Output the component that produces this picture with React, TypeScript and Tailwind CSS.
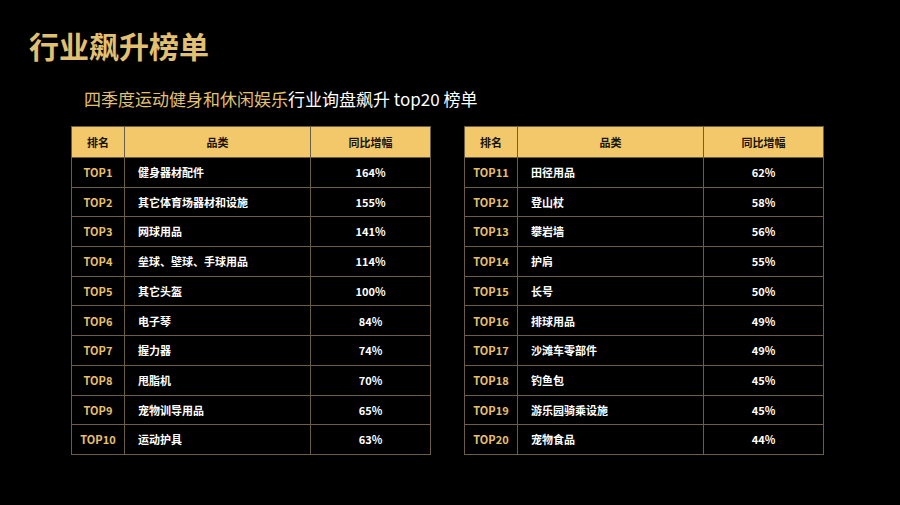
const left = [
  ["TOP1", "健身器材配件", "164%"],
  ["TOP2", "其它体育场器材和设施", "155%"],
  ["TOP3", "网球用品", "141%"],
  ["TOP4", "垒球、壁球、手球用品", "114%"],
  ["TOP5", "其它头盔", "100%"],
  ["TOP6", "电子琴", "84%"],
  ["TOP7", "握力器", "74%"],
  ["TOP8", "甩脂机", "70%"],
  ["TOP9", "宠物训导用品", "65%"],
  ["TOP10", "运动护具", "63%"],
]

const right = [
  ["TOP11", "田径用品", "62%"],
  ["TOP12", "登山杖", "58%"],
  ["TOP13", "攀岩墙", "56%"],
  ["TOP14", "护肩", "55%"],
  ["TOP15", "长号", "50%"],
  ["TOP16", "排球用品", "49%"],
  ["TOP17", "沙滩车零部件", "49%"],
  ["TOP18", "钓鱼包", "45%"],
  ["TOP19", "游乐园骑乘设施", "45%"],
  ["TOP20", "宠物食品", "44%"],
]

const RankTable = ({ rows }: { rows: string[][] }) => {
  return (
    <table className="w-[359px] border-collapse text-[11px] font-bold table-fixed">
      <colgroup>
        <col className="w-[53px]" />
        <col className="w-[186px]" />
        <col className="w-[120px]" />
      </colgroup>
      <thead>
        <tr className="h-[31px] bg-[#f2c86b] text-[#1a1408]">
          <th className="border border-[#6b5e44] text-center">排名</th>
          <th className="border border-[#6b5e44] text-center">品类</th>
          <th className="border border-[#6b5e44] text-center">同比增幅</th>
        </tr>
      </thead>
      <tbody>
        {rows.map((r) => (
          <tr key={r[0]} className="h-[29.7px]">
            <td className="border border-[#6b5e44] text-center text-[#e8c06a]">{r[0]}</td>
            <td className="border border-[#6b5e44] pl-[13px] text-white">{r[1]}</td>
            <td className="border border-[#6b5e44] text-center text-white">{r[2]}</td>
          </tr>
        ))}
      </tbody>
    </table>
  )
}

export default function App() {
  return (
    <div
      className="w-[900px] h-[505px] bg-black overflow-hidden"
      style={{ fontFamily: '"Noto Sans CJK SC", "Noto Sans", sans-serif' }}
    >
      <h1 className="pl-[29px] pt-[25px] text-[30px] leading-[40px] font-bold text-[#e2c072]">
        行业飙升榜单
      </h1>
      <p className="pl-[84px] mt-[21px] text-[17px] leading-[26px] text-white">
        <span className="text-[#e2c072]">四季度运动健身和休闲娱乐</span>行业询盘飙升 top20 榜单
      </p>
      <div className="flex gap-[33px] pl-[71px] mt-[14px]">
        <RankTable rows={left} />
        <RankTable rows={right} />
      </div>
    </div>
  )
}
